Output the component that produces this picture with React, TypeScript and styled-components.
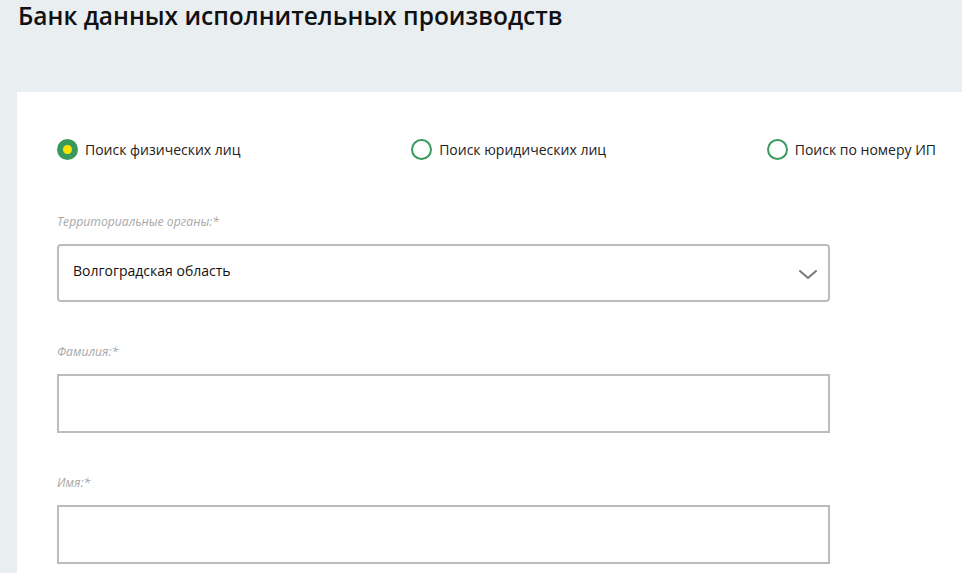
import styled, { createGlobalStyle } from 'styled-components';

const GlobalStyle = createGlobalStyle`
  html, body {
    margin: 0;
    padding: 0;
    background: #e9eef1;
    font-family: "Open Sans", "Liberation Sans", sans-serif;
    overflow: hidden;
  }
`;

const Page = styled.div`
  width: 962px;
  height: 573px;
  background: #e9eef1;
  overflow: hidden;
`;

const Title = styled.h1`
  margin: 0;
  padding: 0 0 0 18px;
  height: 92px;
  font-size: 24.5px;
  font-weight: 600;
  line-height: 32px;
  color: #111;
`;

const Card = styled.div`
  margin-left: 17px;
  background: #fff;
  padding: 38px 26px 0 40px;
  min-height: 500px;
`;

const RadioRow = styled.div`
  display: flex;
  justify-content: space-between;
  align-items: center;
  height: 38px;
`;

const RadioItem = styled.label<{ $shift?: number }>`
  display: flex;
  align-items: center;
  gap: 7px;
  margin-left: ${(p) => p.$shift ?? 0}px;
  font-size: 14px;
  color: #222;
  cursor: pointer;
`;

const Circle = styled.span<{ $checked?: boolean }>`
  width: 21px;
  height: 21px;
  box-sizing: border-box;
  border-radius: 50%;
  border: 2px solid #3a9a5c;
  background: ${(p) => (p.$checked ? '#3a9a5c' : '#fff')};
  display: flex;
  align-items: center;
  justify-content: center;

  &::after {
    content: '';
    display: ${(p) => (p.$checked ? 'block' : 'none')};
    width: 9px;
    height: 9px;
    border-radius: 50%;
    background: #ffe400;
  }
`;

const Field = styled.div<{ $top?: number }>`
  width: 773px;
  margin-top: ${(p) => p.$top ?? 42}px;
`;

const Label = styled.div`
  font-size: 12.2px;
  font-style: italic;
  color: #a8a8a8;
  line-height: 16px;
  margin-bottom: 14px;
`;

const SelectBox = styled.div`
  height: 58px;
  box-sizing: border-box;
  border: 2px solid #bcbcbc;
  border-radius: 4px;
  display: flex;
  align-items: center;
  justify-content: space-between;
  padding: 0 10px 6px 14px;
  font-size: 14px;
  color: #111;

  svg {
    margin-top: 9px;
  }
`;

const TextBox = styled.div`
  height: 59px;
  box-sizing: border-box;
  border: 2px solid #bcbcbc;
`;

const options = [
  { id: 'fiz', text: 'Поиск физических лиц', checked: true, shift: 0 },
  { id: 'yur', text: 'Поиск юридических лиц', checked: false, shift: 10 },
  { id: 'ip', text: 'Поиск по номеру ИП', checked: false, shift: 0 },
];

export default function App() {
  return (
    <Page>
      <GlobalStyle />
      <Title>Банк данных исполнительных производств</Title>
      <Card>
        <RadioRow>
          {options.map((o) => (
            <RadioItem key={o.id} $shift={o.shift}>
              <Circle $checked={o.checked} />
              {o.text}
            </RadioItem>
          ))}
        </RadioRow>
        <Field $top={46}>
          <Label>Территориальные органы:*</Label>
          <SelectBox>
            Волгоградская область
            <svg width="20" height="11" viewBox="0 0 20 11" fill="none">
              <path d="M2 2 L10 9 L18 2" stroke="#777" strokeWidth="2" strokeLinecap="round" strokeLinejoin="round" />
            </svg>
          </SelectBox>
        </Field>
        <Field>
          <Label>Фамилия:*</Label>
          <TextBox />
        </Field>
        <Field>
          <Label>Имя:*</Label>
          <TextBox />
        </Field>
      </Card>
    </Page>
  );
}
